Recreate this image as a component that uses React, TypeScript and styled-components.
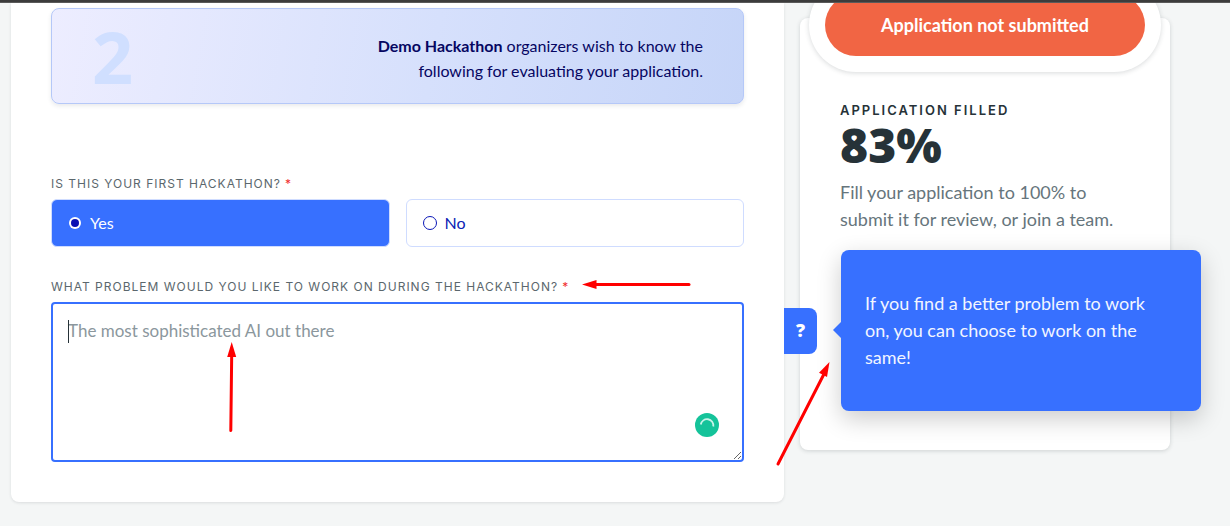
import React, { useState } from "react";
import styled, { createGlobalStyle } from "styled-components";

const blue = "#3770ff";
const navy = "#060662";
const ink = "#263238";
const body = `Lato, "Open Sans", sans-serif`;
const caps = `Inter, "Open Sans", sans-serif`;

const GlobalStyle = createGlobalStyle`
  *, *::before, *::after { box-sizing: border-box; }
  body {
    margin: 0;
    background: #f4f6f6;
    color: ${ink};
    font-family: ${body};
    font-size: 18px;
    line-height: 27px;
  }
  p, h2, fieldset { margin: 0; padding: 0; border: 0; }
`;

const TopBar = styled.header`
  position: relative;
  z-index: 3;
  height: 3px;
  background: #3c3c3c;
  border-bottom: 1px solid #5a5a5a;
`;

const Page = styled.div`
  display: flex;
  align-items: flex-start;
  gap: 16px;
  padding: 0 60px 24px 11px;
`;

const FormCard = styled.main`
  position: relative;
  z-index: 2;
  flex: 1;
  min-width: 0;
  padding: 5px 40px 40px;
  background: #fff;
  border-radius: 0 0 8px 8px;
  box-shadow: 0 1px 3px rgba(38, 50, 56, 0.12);
`;

const Banner = styled.section`
  display: flex;
  align-items: center;
  justify-content: space-between;
  height: 96px;
  padding: 0 40px;
  border: 1px solid #b5c8f8;
  border-radius: 8px;
  background: linear-gradient(100deg, #ededff, #d6e0fc 55%, #c6d5f8);
  box-shadow: 0 2px 4px rgba(38, 50, 56, 0.1);
`;

const StepNumber = styled.span`
  font-family: "Open Sans", sans-serif;
  font-size: 72px;
  line-height: 96px;
  font-weight: 700;
  color: #d0dfff;
`;

const BannerText = styled.p`
  max-width: 340px;
  padding-top: 4px;
  font-size: 16px;
  line-height: 25px;
  text-align: right;
  color: ${navy};
`;

const Question = styled.fieldset`
  min-width: 0;
  margin-top: 72px;
`;

const Field = styled.div`
  margin-top: 32px;
`;

const labelText = `
  display: flex;
  align-items: center;
  gap: 4px;
  padding: 0;
  margin-bottom: 7px;
  font-family: ${caps};
  font-size: 12px;
  line-height: 16px;
  letter-spacing: 1px;
  text-transform: uppercase;
  color: #5b676d;
`;

const Legend = styled.legend`
  ${labelText}
`;

const FieldLabel = styled.label`
  ${labelText}
`;

const Required = styled.span`
  color: #f02d2d;
`;

const Options = styled.div`
  display: grid;
  grid-template-columns: 1fr 1fr;
  gap: 16px;
`;

const Option = styled.label<{ $selected: boolean }>`
  display: flex;
  align-items: center;
  gap: 8px;
  height: 48px;
  padding: 0 16px;
  border: 1px solid #cfdcff;
  border-radius: 6px;
  font-size: 16px;
  line-height: 24px;
  color: ${(p) => (p.$selected ? "#fff" : "#0b22b5")};
  background: ${(p) => (p.$selected ? blue : "#fff")};
  cursor: pointer;
`;

const Radio = styled.input`
  appearance: none;
  display: grid;
  place-items: center;
  flex: none;
  width: 14px;
  height: 14px;
  margin: 0;
  border: 1px solid #0a17b8;
  border-radius: 50%;

  &:checked {
    border-color: transparent;
    background: #fff padding-box;
  }
  &:checked::before {
    content: "";
    width: 8px;
    height: 8px;
    border-radius: 50%;
    background: #0a10b4;
  }
`;

const AnswerBox = styled.div`
  position: relative;
`;

const Answer = styled.textarea`
  display: block;
  width: 100%;
  height: 160px;
  padding: 13px 15px;
  border: 2px solid ${blue};
  border-radius: 4px;
  outline: none;
  resize: vertical;
  background: #fff;
  color: ${ink};
  font: inherit;
  font-size: 17px;

  &::placeholder {
    color: #8b979d;
    opacity: 1;
  }
`;

const Caret = styled.span`
  position: absolute;
  left: 17px;
  top: 18px;
  width: 1px;
  height: 23px;
  background: ${ink};
`;

const WritingAid = styled.button`
  position: absolute;
  right: 25px;
  bottom: 25px;
  width: 24px;
  height: 24px;
  padding: 0;
  border: 0;
  background: none;

  svg { display: block; }
`;

const Help = styled.div`
  position: absolute;
  left: calc(100% + 40px);
  top: -52px;
  display: flex;
  align-items: center;
  gap: 24px;
`;

const HelpTab = styled.button`
  width: 33px;
  height: 46px;
  padding: 0;
  border: 0;
  border-radius: 0 8px 8px 0;
  background: ${blue};
  color: #fff;
  font: 800 18px/27px "Open Sans", sans-serif;
`;

const Tooltip = styled.div`
  position: relative;
  width: 360px;
  padding: 40px 48px 40px 24px;
  border-radius: 8px;
  background: ${blue};
  color: #f2f5ff;
  box-shadow: 0 8px 24px rgba(0, 0, 0, 0.2);

  &::before {
    content: "";
    position: absolute;
    left: -8px;
    top: 72px;
    border: solid transparent;
    border-width: 8px 8px 8px 0;
    border-right-color: ${blue};
  }
`;

const Arrow = styled.svg<{ $left: string; $top: number }>`
  position: absolute;
  left: ${(p) => p.$left};
  top: ${(p) => p.$top}px;
  overflow: visible;
  pointer-events: none;
  fill: #f00;
  stroke: #f00;
  stroke-width: 3;
  stroke-linecap: round;
`;

const StatusCard = styled.aside`
  flex: none;
  width: 370px;
  min-height: 432px;
  margin-top: 15px;
  background: #fff;
  border-radius: 8px;
  box-shadow: 0 1px 4px rgba(38, 50, 56, 0.18);
`;

const StatusFrame = styled.div`
  margin: -40px 9px 0;
  padding: 16px;
  border-radius: 47px;
  background: #fff;
  box-shadow: 0 1px 5px rgba(38, 50, 56, 0.18);
`;

const StatusPill = styled.div`
  border-radius: 31px;
  background: #f16544;
  color: #fff;
  font-weight: 700;
  line-height: 62px;
  text-align: center;
`;

const Progress = styled.section`
  padding: 30px 40px 0;
`;

const ProgressTitle = styled.h2`
  font-family: ${caps};
  font-size: 13px;
  line-height: 16px;
  font-weight: 600;
  letter-spacing: 2px;
  text-transform: uppercase;
`;

const Percent = styled.p`
  font-family: "Open Sans", sans-serif;
  font-size: 48px;
  line-height: 54px;
  font-weight: 800;
`;

const Hint = styled.p`
  margin-top: 7px;
  color: #66757c;
`;

export default function App() {
  const [first, setFirst] = useState("Yes");
  return (
    <>
      <GlobalStyle />
      <TopBar />
      <Page>
        <FormCard>
          <Banner>
            <StepNumber>2</StepNumber>
            <BannerText>
              <b>Demo Hackathon</b> organizers wish to know the following for
              evaluating your application.
            </BannerText>
          </Banner>

          <Question>
            <Legend>
              Is this your first hackathon? <Required>*</Required>
            </Legend>
            <Options>
              {["Yes", "No"].map((value) => (
                <Option key={value} $selected={first === value}>
                  <Radio
                    type="radio"
                    name="first"
                    value={value}
                    checked={first === value}
                    onChange={() => setFirst(value)}
                  />
                  {value}
                </Option>
              ))}
            </Options>
          </Question>

          <Field>
            <FieldLabel htmlFor="problem">
              What problem would you like to work on during the hackathon?{" "}
              <Required>*</Required>
            </FieldLabel>
            <AnswerBox>
              <Answer id="problem" placeholder="The most sophisticated AI out there" />
              <Caret />
              <WritingAid type="button" aria-label="Writing assistant">
                <svg width="24" height="24" viewBox="0 0 24 24" fill="none">
                  <circle cx="12" cy="12" r="12" fill="#15c39a" />
                  <path
                    d="M5.8 11.5A6.3 6.3 0 0 1 18.3 13.5"
                    stroke="#c9f3e8"
                    strokeWidth="1.8"
                  />
                </svg>
              </WritingAid>
              <Help>
                <HelpTab type="button" aria-describedby="problem-tip">?</HelpTab>
                <Tooltip id="problem-tip" role="tooltip">
                  If you find a better problem to work on, you can choose to
                  work on the same!
                </Tooltip>
              </Help>
              <Arrow $left="531px" $top={-23} width="108" height="10" aria-hidden>
                <path d="M12 5.5H107" />
                <path d="M0 5.5L14.500 1V10Z" stroke="none" />
              </Arrow>
              <Arrow $left="176px" $top={40} width="9" height="90" aria-hidden>
                <path d="M4.700 12L3.800 88.500" />
                <path d="M4.700 0L9.200 15H0.200Z" stroke="none" />
              </Arrow>
              <Arrow $left="calc(100% + 33px)" $top={60} width="53" height="103" aria-hidden>
                <path d="M1 102L47 12" />
                <path d="M52.500 0L50 15L42 10.800Z" stroke="none" />
              </Arrow>
            </AnswerBox>
          </Field>
        </FormCard>

        <StatusCard>
          <StatusFrame>
            <StatusPill>Application not submitted</StatusPill>
          </StatusFrame>
          <Progress>
            <ProgressTitle>Application filled</ProgressTitle>
            <Percent>83%</Percent>
            <Hint>
              Fill your application to 100% to submit it for review, or join a
              team.
            </Hint>
          </Progress>
        </StatusCard>
      </Page>
    </>
  );
}
